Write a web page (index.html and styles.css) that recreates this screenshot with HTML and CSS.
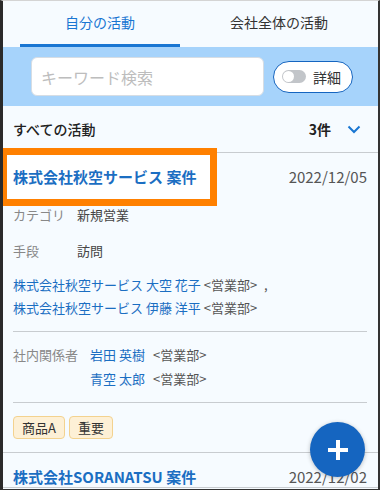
FILE: index.html
```html
<!DOCTYPE html>
<html lang="ja">
<head>
  <meta charset="UTF-8" />
  <meta name="viewport" content="width=device-width, initial-scale=1.0"/>
  <title>活動一覧</title>
  <link rel="stylesheet" href="styles.css">
</head>
<body>
  <div class="screen">
    <div class="tabs">
      <div class="tab tab-active">自分の活動</div>
      <div class="tab tab-wide">会社全体の活動</div>
    </div>

    <div class="search-band">
      <input class="search-input" type="text" placeholder="キーワード検索">
      <div class="detail-toggle">
        <span class="switch"><span class="knob"></span></span>
        <span>詳細</span>
      </div>
    </div>

    <div class="list-header">
      <span class="list-title">すべての活動</span>
      <span class="count">3件</span>
      <svg class="chevron" width="14" height="9" viewBox="0 0 14 9">
        <polyline points="1.5,1.5 7,7 12.5,1.5" fill="none" stroke="#1976d2" stroke-width="2"/>
      </svg>
    </div>

    <div class="card">
      <div class="card-top">
        <span class="card-title highlight">株式会社秋空サービス 案件</span>
        <span class="card-date">2022/12/05</span>
      </div>
      <div class="meta meta-first">
        <span class="meta-label">カテゴリ</span>
        <span class="meta-value">新規営業</span>
      </div>
      <div class="meta">
        <span class="meta-label">手段</span>
        <span class="meta-value">訪問</span>
      </div>
      <div class="contacts">
        <div><a href="#">株式会社秋空サービス 大空 花子</a> <span class="dept">&lt;営業部&gt;</span> ,</div>
        <div><a href="#">株式会社秋空サービス 伊藤 洋平</a> <span class="dept">&lt;営業部&gt;</span></div>
      </div>
      <div class="members">
        <span class="meta-label members-label">社内関係者</span>
        <div class="member-list">
          <div><a href="#">岩田 英樹</a><span class="dept">&lt;営業部&gt;</span></div>
          <div><a href="#">青空 太郎</a><span class="dept">&lt;営業部&gt;</span></div>
        </div>
      </div>
      <div class="tags">
        <span class="tag">商品A</span>
        <span class="tag">重要</span>
      </div>
    </div>

    <div class="card">
      <div class="card-top">
        <span class="card-title">株式会社SORANATSU 案件</span>
        <span class="card-date">2022/12/02</span>
      </div>
    </div>

    <button class="fab" aria-label="追加">
      <svg width="22" height="22" viewBox="0 0 22 22">
        <path d="M11 1v20M1 11h20" stroke="#fff" stroke-width="4"/>
      </svg>
    </button>
  </div>
</body>
</html>
```

FILE: styles.css
```css
body {
  margin: 0;
  font-family: "Noto Sans CJK JP", "Noto Sans", sans-serif;
  color: #333;
}

.screen {
  position: relative;
  box-sizing: border-box;
  width: 380px;
  height: 490px;
  overflow: hidden;
  background: #f6fbff;
  border-left: 3px solid #2a2a2a;
  border-right: 2px solid #333;
  border-top: 1px solid #d4d4d4;
  border-bottom: 1px solid #333;
}

a {
  color: #1b6ec2;
  text-decoration: none;
}

/* tabs */
.tabs {
  display: flex;
  height: 46px;
  padding-left: 17px;
}

.tab {
  width: 160px;
  text-align: center;
  font-size: 14px;
  line-height: 43px;
  color: #333;
  border-bottom: 3px solid transparent;
}

.tab-active {
  color: #1976d2;
  border-bottom-color: #1976d2;
}

.tab-wide {
  flex: 1;
}

/* search */
.search-band {
  display: flex;
  align-items: center;
  gap: 9px;
  height: 59px;
  padding-left: 28px;
  background: #a6d3fb;
}

.search-input {
  box-sizing: border-box;
  width: 233px;
  height: 39px;
  padding: 0 9px;
  border: 1px solid #d6dde4;
  border-radius: 6px;
  background: #fff;
  font-family: inherit;
  font-size: 16px;
  outline: none;
}

.search-input::placeholder {
  color: #bdbdbd;
}

.detail-toggle {
  box-sizing: border-box;
  display: flex;
  align-items: center;
  gap: 7px;
  width: 80px;
  height: 32px;
  padding-left: 8px;
  border: 1.5px solid #1565c0;
  border-radius: 16px;
  background: #fff;
  font-size: 14px;
  color: #333;
}

.switch {
  position: relative;
  display: inline-block;
  width: 24px;
  height: 13px;
  border-radius: 7px;
  background: #c2c5c9;
}

.knob {
  position: absolute;
  left: 1px;
  top: 1px;
  width: 11px;
  height: 11px;
  border-radius: 50%;
  background: #fff;
}

/* list header */
.list-header {
  display: flex;
  align-items: center;
  height: 46px;
  padding: 0 17px 0 10px;
  border-bottom: 1px solid #c8ccd0;
  font-size: 14px;
  color: #222;
}

.list-title {
  flex: 1;
  font-weight: 500;
}

.count {
  font-weight: bold;
  margin-right: 16px;
}

/* card */
.card {
  padding: 14px 11px 0 10px;
  border-bottom: 1px solid #c8ccd0;
}

.card-top {
  display: flex;
  justify-content: space-between;
  line-height: 20px;
  font-size: 15px;
}

.card-title {
  color: #1b6ec2;
  font-weight: bold;
}

.card-date {
  color: #555;
}

.highlight {
  position: relative;
  z-index: 1;
}

.highlight::before {
  content: "";
  position: absolute;
  z-index: -1;
  left: -13px;
  top: -19px;
  width: 217px;
  height: 58px;
  box-sizing: border-box;
  border: 7px solid #ff8000;
  background: #fff;
}

.meta {
  display: flex;
  margin-top: 16px;
  font-size: 13px;
  line-height: 20px;
}

.meta-first {
  margin-top: 18px;
}

.meta-label {
  width: 64px;
  color: #888;
}

.meta-value {
  color: #444;
}

.contacts {
  margin-top: 12px;
  padding-bottom: 12px;
  border-bottom: 1px solid #c8ccd0;
  font-size: 13px;
  line-height: 23px;
  color: #555;
}

.dept {
  color: #555;
  margin-left: 8px;
}

.contacts .dept {
  margin-left: 0;
  margin-right: 4px;
}

.members {
  display: flex;
  padding: 11px 0;
  border-bottom: 1px solid #c8ccd0;
  font-size: 13px;
  line-height: 24px;
}

.members-label {
  width: 77px;
}

.tags {
  display: flex;
  gap: 4px;
  padding: 13px 0;
}

.tag {
  padding: 0 8px;
  font-size: 13px;
  line-height: 21px;
  color: #333;
  background: #fdf0d6;
  border: 1px solid #f3d28f;
  border-radius: 4px;
}

/* floating button */
.fab {
  position: absolute;
  right: 13px;
  bottom: 12px;
  width: 55px;
  height: 55px;
  border: none;
  border-radius: 50%;
  background: #1565c0;
  display: flex;
  align-items: center;
  justify-content: center;
  box-shadow: 0 1px 4px rgba(0, 0, 0, 0.25);
  padding: 0;
}
```
